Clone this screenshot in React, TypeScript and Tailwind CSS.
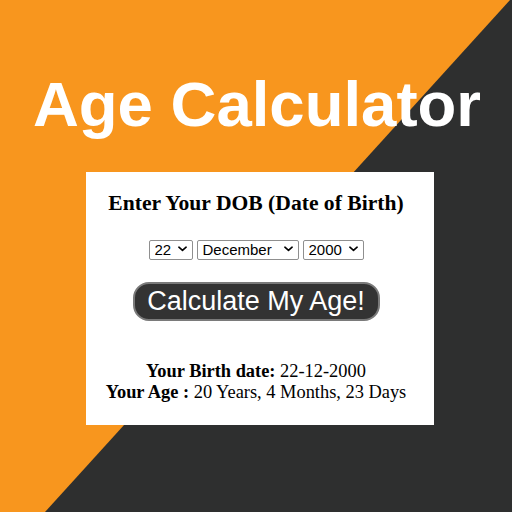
import { useState } from "react";

const days = Array.from({ length: 31 }, (_, i) => String(i + 1));
const months = [
  "January", "February", "March", "April", "May", "June",
  "July", "August", "September", "October", "November", "December",
];
const years = Array.from({ length: 121 }, (_, i) => String(1950 + i));

function Chevron() {
  return (
    <svg viewBox="0 0 10 6" className="w-[9px] h-[6px]" fill="none">
      <path d="M1 1l4 3.5L9 1" stroke="#000" strokeWidth="1.8" strokeLinecap="round" strokeLinejoin="round" />
    </svg>
  );
}

function Picker({
  value,
  options,
  onChange,
  width,
}: {
  value: string;
  options: string[];
  onChange: (v: string) => void;
  width: string;
}) {
  return (
    <div className={`relative h-[20px] ${width}`}>
      <select
        value={value}
        onChange={(e) => onChange(e.target.value)}
        className="appearance-none w-full h-full bg-white border border-[#8f8f8f] rounded-[2px] pl-[5px] text-[15px] leading-[18px] text-black outline-none"
        style={{ fontFamily: "'Liberation Sans', Arial, sans-serif" }}
      >
        {options.map((o) => (
          <option key={o} value={o}>
            {o}
          </option>
        ))}
      </select>
      <span className="pointer-events-none absolute right-[6px] top-[8px] flex">
        <Chevron />
      </span>
    </div>
  );
}

export default function App() {
  const [day, setDay] = useState("22");
  const [month, setMonth] = useState("December");
  const [year, setYear] = useState("2000");

  return (
    <div className="relative w-[512px] h-[512px] overflow-hidden bg-[#f8961e]">
      {/* Diagonal background */}
      <svg className="absolute inset-0" width="512" height="512" viewBox="0 0 512 512">
        <polygon points="510,0 512,0 512,512 45,512" fill="#2e2f2f" />
      </svg>

      <div className="relative flex flex-col pt-[73px]">
        <h1
          className="text-center text-white font-bold text-[63.5px] leading-none pl-[2px]"
          style={{ fontFamily: "'Liberation Sans', Arial, sans-serif" }}
        >
          Age Calculator
        </h1>

        <div
          className="ml-[86px] mt-[35px] w-[348px] bg-white flex flex-col items-center pt-[19px] pb-[22px] pr-[8px] text-black"
          style={{ fontFamily: "'Liberation Serif', 'Times New Roman', serif" }}
        >
          <h2 className="text-[21.6px] leading-[24px] font-bold">Enter Your DOB (Date of Birth)</h2>

          <div className="mt-[23px] flex gap-[4px]">
            <Picker value={day} options={days} onChange={setDay} width="w-[44px]" />
            <Picker value={month} options={months} onChange={setMonth} width="w-[102px]" />
            <Picker value={year} options={years} onChange={setYear} width="w-[61px]" />
          </div>

          <button
            className="mt-[24px] h-[39px] w-[247px] rounded-[16px] bg-[#333333] border-2 border-[#7a7a7a] text-white text-[27px] leading-none"
            style={{ fontFamily: "'Liberation Sans', Arial, sans-serif" }}
          >
            Calculate My Age!
          </button>

          <div className="mt-[40px] text-[18.4px] leading-[21px] text-center">
            <p>
              <b>Your Birth date:</b> 22-12-2000
            </p>
            <p>
              <b>Your Age :</b> 20 Years, 4 Months, 23 Days
            </p>
          </div>
        </div>
      </div>
    </div>
  );
}
